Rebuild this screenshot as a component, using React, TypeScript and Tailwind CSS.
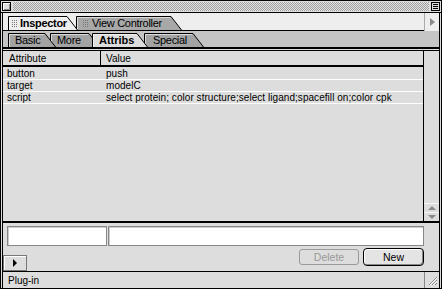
import React from "react";

function TabShape({ w, h, fill }: { w: number; h: number; fill: string }) {
  return (
    <svg className="absolute left-0 top-0" width={w} height={h}>
      <path d={`M0.5 ${h} V0.5 H${w - 11} L${w - 0.5} ${h}`} fill={fill} stroke="#000" />
      <path d={`M1.5 ${h} V1.5 H${w - 12}`} fill="none" stroke="#ffffff" strokeOpacity="0.6" />
    </svg>
  );
}

function Grip() {
  return (
    <div className="w-[6px] h-[8px] shrink-0 bg-[conic-gradient(from_90deg_at_1px_1px,#777_25%,transparent_0)] bg-[length:2px_2px]" />
  );
}

const rows = [
  { attr: "button", value: "push" },
  { attr: "target", value: "modelC" },
  { attr: "script", value: "select protein; color structure;select ligand;spacefill on;color cpk" },
];

export default function App() {
  return (
    <div className="w-[442px] h-[289px] flex flex-col bg-[#dddddd] border border-black text-black font-['Liberation_Sans',Arial,sans-serif] text-[10px] leading-[11px] overflow-hidden select-none">
      {/* title bar */}
      <div className="h-[12px] shrink-0 flex items-center gap-[2px] px-[1px] border-b border-black">
        <div className="w-[9px] h-[9px] border border-black bg-[#dddddd] shadow-[inset_1px_1px_0_#fff,inset_-1px_-1px_0_#888]" />
        <div className="flex-1 h-[9px] bg-[conic-gradient(#a0a0a0_25%,#e2e2e2_0_50%,#a0a0a0_0_75%,#e2e2e2_0)] bg-[length:2px_2px]" />
        <div className="w-[9px] h-[9px] border border-black bg-[#dddddd] flex flex-col justify-center gap-[1px] px-[1px]">
          <div className="h-[1px] bg-black" />
          <div className="h-[1px] bg-black" />
          <div className="h-[1px] bg-black" />
        </div>
      </div>

      {/* window frame */}
      <div className="flex-1 flex flex-col min-h-0 mx-[1px] border-x border-black">
        {/* window tabs */}
        <div className="h-[18px] shrink-0 flex bg-[#eeeeee]">
          <div className="flex-1 flex items-end pl-[5px] border-b border-black">
            <div className="relative z-[2] w-[70px] h-[14px] shrink-0">
              <TabShape w={70} h={14} fill="#eeeeee" />
              <div className="relative h-full flex items-center gap-[3px] pl-[3px] font-bold text-[11px] tracking-[-0.3px]">
                <Grip />
                <span>Inspector</span>
              </div>
            </div>
            <div className="relative z-[1] -ml-[2px] w-[106px] h-[14px] shrink-0">
              <TabShape w={106} h={14} fill="#a8a8a8" />
              <div className="relative h-full flex items-center gap-[4px] pl-[6px] text-[11px] tracking-[-0.3px]">
                <Grip />
                <span>View Controller</span>
              </div>
            </div>
          </div>
          <div className="w-[15px] flex items-center justify-center border-l border-[#aaaaaa]">
            <div className="w-0 h-0 border-y-[4px] border-y-transparent border-l-[5px] border-l-[#8a8a8a]" />
          </div>
        </div>

        {/* panel tabs */}
        <div className="h-[16px] shrink-0 flex items-end pl-[5px] bg-[#c5c5c5] text-[11px] tracking-[-0.3px]">
          <div className="relative z-[4] w-[48px] h-[14px] shrink-0">
            <TabShape w={48} h={14} fill="#a3a3a3" />
            <div className="relative h-full flex items-center pl-[7px]">Basic</div>
          </div>
          <div className="relative z-[3] -ml-[6px] w-[50px] h-[14px] shrink-0">
            <TabShape w={50} h={14} fill="#a3a3a3" />
            <div className="relative h-full flex items-center pl-[7px]">More</div>
          </div>
          <div className="relative z-[10] -ml-[8px] w-[56px] h-[14px] shrink-0">
            <TabShape w={56} h={14} fill="#dddddd" />
            <div className="relative h-full flex items-center pl-[7px] font-bold tracking-normal">Attribs</div>
          </div>
          <div className="relative z-[1] -ml-[4px] w-[60px] h-[14px] shrink-0">
            <TabShape w={60} h={14} fill="#a3a3a3" />
            <div className="relative h-full flex items-center pl-[9px]">Special</div>
          </div>
        </div>
        <div className="h-[4px] shrink-0 border-t-2 border-b border-black bg-[#dddddd]" />

        {/* table with scrollbar */}
        <div className="flex-1 flex min-h-0 border-b-2 border-black">
          <div className="flex-1 flex flex-col border-r border-black">
            <div className="h-[16px] shrink-0 flex border-b-2 border-black">
              <div className="w-[98px] flex items-center pl-[6px] border-r border-black">Attribute</div>
              <div className="flex-1 flex items-center pl-[5px]">Value</div>
            </div>
            <div className="flex-1 pt-[1px]">
              {rows.map((r) => (
                <div key={r.attr} className="h-[12px] flex border-b border-white">
                  <div className="w-[103px] pl-[4px] whitespace-nowrap">{r.attr}</div>
                  <div className="flex-1 whitespace-nowrap tracking-[0.05px]">{r.value}</div>
                </div>
              ))}
            </div>
          </div>
          <div className="w-[15px] flex flex-col justify-end">
            <div className="h-[18px] flex flex-col border-t border-[#f4f4f4]">
              <div className="flex-1 flex items-center justify-center border-b border-[#f4f4f4]">
                <div className="w-0 h-0 border-x-[4px] border-x-transparent border-b-[4px] border-b-[#8a8a8a]" />
              </div>
              <div className="flex-1 flex items-center justify-center">
                <div className="w-0 h-0 border-x-[4px] border-x-transparent border-t-[4px] border-t-[#8a8a8a]" />
              </div>
            </div>
          </div>
        </div>

        {/* edit area */}
        <div className="h-[49px] shrink-0 flex flex-col border-b border-black">
          <div className="flex gap-[1px] pl-[4px] pr-[15px] pt-[3px]">
            <div className="w-[100px] h-[20px] bg-white border border-[#888888] shadow-[inset_1px_1px_0_#cccccc]" />
            <div className="flex-1 h-[20px] bg-white border border-[#888888] shadow-[inset_1px_1px_0_#cccccc]" />
          </div>
          <div className="flex-1 flex items-end justify-between pr-[15px]">
            <div className="w-[24px] h-[16px] flex items-center pl-[9px] border border-[#777777] bg-[#dddddd] shadow-[inset_1px_1px_0_#fff]">
              <div className="w-0 h-0 border-y-[4px] border-y-transparent border-l-[4px] border-l-black" />
            </div>
            <div className="flex items-center gap-[4px] mb-[5px] text-[10.5px]">
              <div className="w-[60px] h-[16px] flex items-center justify-center rounded-[3px] border border-[#9a9a9a] text-[#999999]">
                Delete
              </div>
              <div className="w-[61px] h-[18px] flex items-center justify-center rounded-[4px] border border-black bg-[#e4e4e4] shadow-[inset_1px_1px_0_#fff,inset_-1px_-1px_0_#888]">
                New
              </div>
            </div>
          </div>
        </div>

        {/* status bar */}
        <div className="h-[16px] shrink-0 flex">
          <div className="flex-1 flex items-center pl-[5px]">Plug-in</div>
          <div className="w-[15px] border-l border-[#888888] flex items-center justify-center">
            <svg width="11" height="11">
              <path d="M10 2 L2 10 M10 5 L5 10 M10 8 L8 10" stroke="#888" />
              <path d="M10 3 L3 10 M10 6 L6 10" stroke="#fff" />
            </svg>
          </div>
        </div>
      </div>
    </div>
  );
}
